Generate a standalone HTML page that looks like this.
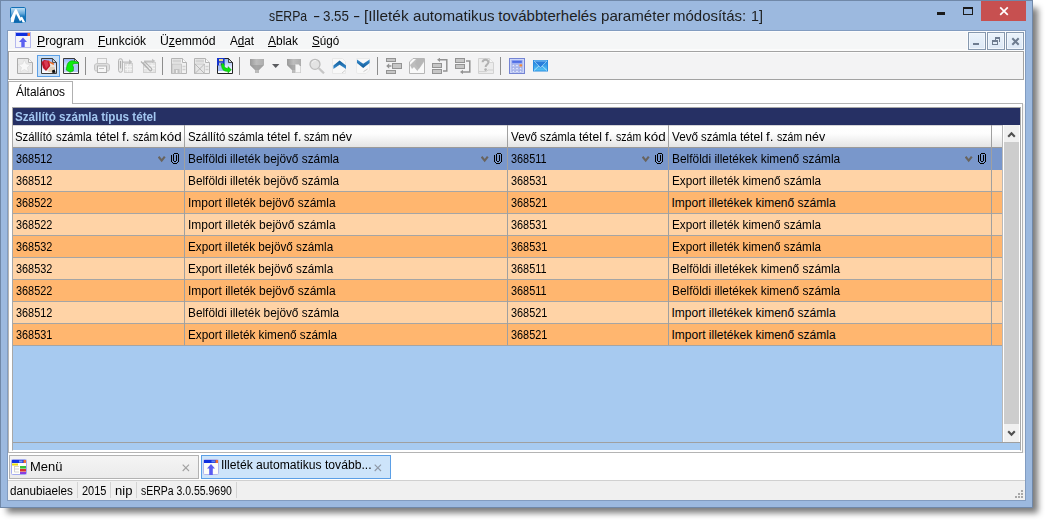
<!DOCTYPE html>
<html>
<head>
<meta charset="utf-8">
<title>sERPa</title>
<style>
html,body{margin:0;padding:0;background:#fff;}
body{width:1045px;height:520px;overflow:hidden;position:relative;font-family:"Liberation Sans",sans-serif;font-size:12px;color:#000;}
.a{position:absolute;}
.t{position:absolute;white-space:pre;transform-origin:0 50%;line-height:16px;height:16px;}
#shadow{left:6.5px;top:7.5px;width:1031.5px;height:505.5px;background:rgba(0,0,0,.52);filter:blur(3.2px);}
#win{left:0;top:0;width:1033px;height:508px;background:#9cb9df;box-sizing:border-box;border:1px solid #7088a8;}
#client{left:8px;top:31px;width:1017px;height:469px;background:#fff;outline:1px solid #829cc0;}
#menubar{left:0;top:0;width:1017px;height:20px;background:linear-gradient(#fcfcfd 0,#fcfcfd 1px,#f5f6f7 1px,#f5f6f7 18px,#fbfbfb 18px);}
#toolbar{left:0;top:20px;width:1016px;height:29px;box-sizing:border-box;border:1px solid #a2a2a2;background:#f3f3f4;box-shadow:inset 1px 1px 0 #fcfcfc;}
.sep{position:absolute;top:5px;width:1px;height:18px;background:#8d8d8d;}
.ic{position:absolute;top:6px;width:16px;height:16px;}
.mb{position:absolute;top:1px;width:16px;height:16px;border:1px solid #8698ae;background:linear-gradient(#ebf3fb,#dce8f6);box-shadow:0 0 0 1px #fbfcfe,inset 0 0 0 1px #f1f6fc;}
.row{position:absolute;left:0;width:989px;height:21px;border-bottom:1px solid #a5a5a5;}
.sel{background:#7997cb;border-bottom-color:#7997cb;}
.ro1{background:#ffd3a6;}
.ro2{background:#ffb66f;}
.vl{position:absolute;top:0;width:1px;background:#a0a0a0;}
.tw{top:0;font-size:15px;line-height:18px;height:18px;color:#1e1e1e;}
/*FIT-START*/
#m1{left:29.38px;top:2px;transform:scaleX(1.0215);}
#m2{left:89.50px;top:2px;transform:scaleX(1.0021);}
#m3{left:151.58px;top:2px;transform:scaleX(1.0170);}
#m4{left:221.50px;top:2px;transform:scaleX(0.9737);}
#m5{left:260.10px;top:2px;transform:scaleX(0.9967);}
#m6{left:303.51px;top:2px;transform:scaleX(0.9704);}
#tab{left:8.20px;top:53px;transform:scaleX(0.9918);}
#ph{left:2.11px;top:1px;transform:scaleX(0.9722);}
.k0.sN{left:2.85px;top:3px;transform:scaleX(0.9077);}
.k2.sN{left:497.85px;top:3px;transform:scaleX(0.9077);}
.k1.sA{left:174.51px;top:3px;transform:scaleX(0.9856);}
.k1.sB{left:174.50px;top:3px;transform:scaleX(0.9966);}
.k1.sC{left:174.52px;top:3px;transform:scaleX(0.9760);}
.k1.sD{left:174.52px;top:3px;transform:scaleX(0.9801);}
.k3.sD{left:658.52px;top:3px;transform:scaleX(0.9801);}
.k3.sE{left:658.51px;top:3px;transform:scaleX(0.9929);}
.k3.sF{left:658.50px;top:3px;transform:scaleX(1.0000);}
#mt1{left:21.52px;top:428px;transform:scaleX(1.0796);}
#mt2{left:213.49px;top:426px;transform:scaleX(1.0119);}
#s1{left:2.11px;top:452px;transform:scaleX(0.9725);}
#s2{left:73.84px;top:452px;transform:scaleX(0.9165);}
#s3{left:106.79px;top:452px;transform:scaleX(1.0847);}
#s4{left:133.28px;top:452px;transform:scaleX(0.8725);}
/*FIT-END*/
</style>
</head>
<body>
<div id="shadow" class="a"></div>
<div id="win" class="a"></div>

<!-- title bar -->
<svg class="a" style="left:10px;top:7px" width="16" height="16" viewBox="0 0 16 16">
 <defs><linearGradient id="lg1" x1="0" y1="0" x2="0" y2="1"><stop offset="0" stop-color="#c4e2f6"/><stop offset=".4" stop-color="#64a8da"/><stop offset=".6" stop-color="#1878bc"/><stop offset="1" stop-color="#0a64aa"/></linearGradient></defs>
 <rect x="0.500" y="0.500" width="15" height="15" rx="1.200" fill="url(#lg1)" stroke="#1270b6"/>
 <path d="M0.600 15.400 L0.600 11.200 L5.200 2.200 L6.600 2.200 L10.600 10.600 L12 9.400 L15.400 15.400 L12.600 15.400 L11.400 12.800 L10 14.400 L6 6.600 L3.600 15.400 Z" fill="#fff"/>
</svg>
<div class="a" id="titlew" style="left:0;top:7px;width:900px;height:18px;"><span class="t tw" style="left:269.19px;transform:scaleX(0.8173);">sERPa</span><span class="t tw" style="left:312.60px;transform:scaleX(1.4500);">-</span><span class="t tw" style="left:323.06px;transform:scaleX(0.8893);">3.55</span><span class="t tw" style="left:353.10px;transform:scaleX(1.4500);">-</span><span class="t tw" style="left:364.27px;transform:scaleX(1.0296);">[Illeték</span><span class="t tw" style="left:412.70px;transform:scaleX(1.0094);">automatikus</span><span class="t tw" style="left:498.25px;transform:scaleX(1.0000);">továbbterhelés</span><span class="t tw" style="left:600.69px;transform:scaleX(1.0082);">paraméter</span><span class="t tw" style="left:673.40px;transform:scaleX(0.9986);">módosítás:</span><span class="t tw" style="left:750.55px;transform:scaleX(0.9524);">1]</span></div>
<div class="a" style="left:937px;top:12px;width:8px;height:3px;background:#1a1a1a;"></div>
<div class="a" style="left:963px;top:7px;width:10px;height:8px;box-sizing:border-box;border:1px solid #1a1a1a;border-top-width:2px;"></div>
<div class="a" style="left:981px;top:1px;width:45px;height:20px;background:#c75050;"></div>
<svg class="a" style="left:999px;top:6px" width="10" height="10" viewBox="0 0 10 10"><path d="M1.200 1.400 L8.800 8.800 M8.800 1.400 L1.200 8.800" stroke="#fff" stroke-width="1.700" fill="none"/></svg>

<div id="client" class="a">
 <!-- menu bar -->
 <div id="menubar" class="a">
  <svg class="a" style="left:7px;top:1px" width="16" height="16" viewBox="0 0 16 16">
   <rect x="0.5" y="0.5" width="15" height="15" fill="#f4f4fa" stroke="#b4b8ee"/>
   <rect x="1" y="1" width="14" height="3" fill="#1030e0"/>
   <rect x="12.5" y="1" width="2.5" height="3" fill="#f07030"/>
   <path d="M8 5.5 L12 10 L9.7 10 L9.7 15 L6.3 15 L6.3 10 L4 10 Z" fill="#5a60f0"/>
  </svg>
  <div class="t" id="m1" style=""><u>P</u>rogram</div>
  <div class="t" id="m2" style=""><u>F</u>unkciók</div>
  <div class="t" id="m3" style="">Ü<u>z</u>emmód</div>
  <div class="t" id="m4" style="">A<u>d</u>at</div>
  <div class="t" id="m5" style=""><u>A</u>blak</div>
  <div class="t" id="m6" style=""><u>S</u>úgó</div>
  <div class="mb" style="left:960px;"><div class="a" style="left:4px;top:10px;width:6px;height:2px;background:#6e7c90;"></div></div>
  <div class="mb" style="left:979px;"><svg class="a" style="left:3px;top:3px" width="10" height="10" viewBox="0 0 10 10" shape-rendering="crispEdges"><path d="M4 1h5v2h-5z M8 3h1v3h-1z M4 3h1v1h-1z M1 4h6v2h-6z M1 6h1v3h-1z M6 6h1v3h-1z M1 8h6v1h-6z" fill="#6e7c90"/></svg></div>
  <div class="mb" style="left:998px;"><svg class="a" style="left:4px;top:4px" width="9" height="9" viewBox="0 0 9 9"><path d="M1.300 1.300 L7.700 7.700 M7.700 1.300 L1.300 7.700" stroke="#6e7c90" stroke-width="2" fill="none"/></svg></div>
 </div>
 <!-- toolbar -->
 <div id="toolbar" class="a">
  <div class="a" style="left:28px;top:3px;width:21px;height:20px;background:#c9e0f7;border:1px solid #5b9fe6;"></div>
  <!--ICONS-START-->
  <svg width="0" height="0" style="position:absolute"><defs>
   <linearGradient id="gDocB" x1="0" y1="0" x2="0" y2="1"><stop offset="0" stop-color="#8fb0f6"/><stop offset=".55" stop-color="#dfe9ff"/><stop offset="1" stop-color="#ffffff"/></linearGradient>
   <linearGradient id="gGray" x1="0" y1="0" x2="1" y2="0"><stop offset="0" stop-color="#9a9a9a"/><stop offset=".45" stop-color="#bdbdbd"/><stop offset="1" stop-color="#adadad"/></linearGradient>
   <linearGradient id="gChev" x1="0" y1="0" x2="0" y2="1"><stop offset="0" stop-color="#0f5a98"/><stop offset="1" stop-color="#3a8ed0"/></linearGradient>
   <linearGradient id="gChev2" x1="0" y1="0" x2="0" y2="1"><stop offset="0" stop-color="#3a8ed0"/><stop offset="1" stop-color="#0f5a98"/></linearGradient>
   <linearGradient id="gMail" x1="0" y1="0" x2="0" y2="1"><stop offset="0" stop-color="#1e78d8"/><stop offset="1" stop-color="#58c8f8"/></linearGradient>
  </defs></svg>
  <!-- 1 new (disabled) -->
  <svg class="ic" style="left:8px" viewBox="0 0 16 16"><path d="M0.500 0.500 H11.500 L15.500 4.500 V15.500 H0.500 Z" fill="#e9e9e9" stroke="#ababab"/><path d="M11.500 0.500 V4.500 H15.500" fill="#f6f6f6" stroke="#b4b4b4"/><path d="M7.400 1.800 L9.300 6 L13.800 6.400 L10.400 9.400 L11.500 14 L7.400 11.500 L3.300 14 L4.400 9.400 L1 6.400 L5.500 6 Z" fill="#f8f8f8" stroke="#dadada" stroke-width=".7"/></svg>
  <!-- 2 edit (pencil) -->
  <svg class="ic" style="left:32px" viewBox="0 0 16 16"><path d="M0.500 0.500 H11.500 L15.500 4.500 V15.500 H0.500 Z" fill="url(#gDocB)" stroke="#3a3a3a"/><path d="M11.500 0.500 V4.500 H15.500 Z" fill="#c4ccd6" stroke="#3a3a3a" stroke-width=".8"/><path d="M8 5.500 L13 6.200 L14 11.500 L11 14.600 L5 13 Z" fill="#efe4d6"/><path d="M9 9 L13.600 9 L14 11.500 L11 14.600 L7 13.500 Z" fill="#d8c4ac" opacity=".7"/><path d="M0.500 4.200 L3 2 L8.200 2.800 L9.200 8 L5 13 L2 10 Z" fill="#c0162c"/><path d="M2.600 3.200 L6.400 3 L7.600 7.600 L5 10.600 Z" fill="#e24a60" opacity=".75"/><path d="M7 2.400 L13.200 5.400 L12.600 7 L8.400 4.800 Z" fill="#ee6a1e"/><path d="M11 12.400 L13.600 11.400 L14.700 14.700 L11.400 15 Z" fill="#0c0c0c"/></svg>
  <!-- 3 doc + green arrow -->
  <svg class="ic" style="left:54px" viewBox="0 0 16 16"><path d="M0.500 0.500 H11.500 L15.500 4.500 V15.500 H0.500 Z" fill="url(#gDocB)" stroke="#3a3a3a"/><rect x="8" y="7" width="7" height="7" fill="#a4bcf6" opacity=".8"/><rect x="1" y="9" width="4" height="5" fill="#b4c8f8" opacity=".7"/><path d="M11.500 0.500 V4.500 H15.500 Z" fill="#c4ccd6" stroke="#3a3a3a" stroke-width=".8"/><path d="M15.500 4.300 L15.500 5.600 L11 5.700 C9.500 6 9 7.200 10.500 9 L10.300 13 L7 14.300 L3.200 12 L4 7.200 C5 3.600 8 2.200 11 3 Z" fill="#0aee0a" stroke="#089408" stroke-width=".6"/></svg>
  <div class="sep" style="left:76px"></div>
  <!-- 4 printer (disabled) -->
  <svg class="ic" style="left:85px" viewBox="0 0 16 16"><rect x="3.5" y="0.5" width="9" height="7" fill="#f3f3f3" stroke="#c9c9c9"/><path d="M0.5 8 C0.5 6 2 5.5 3.5 5.5 H12.5 C14 5.5 15.5 6 15.5 8 V11.5 C15.500 12.6 14.500 13 13 13 H3 C1.5 13 0.500 12.6 0.500 11.500 Z" fill="#dedede" stroke="#c4c4c4"/><rect x="3.5" y="8" width="9" height="6.5" fill="#f6f6f6" stroke="#b4b4b4"/><rect x="5" y="10" width="5" height="1" fill="#c4c4c4"/><rect x="3" y="14" width="10" height="1" fill="#ababab"/></svg>
  <!-- 5 clip+grid arrow (disabled) -->
  <svg class="ic" style="left:108px" viewBox="0 0 16 16"><rect x="7.5" y="5.5" width="8" height="9" fill="#e2e2e2" stroke="#cfcfcf"/><path d="M8 8.500 H15 M8 11.500 H15 M10.500 6 V14 M13 6 V14" stroke="#f2f2f2"/><path d="M6 3.500 H12 V1.200 L15.400 4 L12 6.600 V4.800 H6 Z" fill="#bdbdbd"/><rect x="1.5" y="0.700" width="4" height="13.600" rx="2" fill="#e9e9e9" stroke="#b6b6b6"/><path d="M3.500 3 V10.500" stroke="#adadad" stroke-width="1.200"/></svg>
  <!-- 6 diagonal clip + grid (disabled) -->
  <svg class="ic" style="left:131px" viewBox="0 0 16 16"><rect x="3.5" y="4.500" width="12" height="10" fill="#e4e4e4" stroke="#d0d0d0"/><path d="M4 7.500 H15 M4 10.500 H15 M8 5 V14 M12 5 V14" stroke="#f3f3f3"/><path d="M4 2.600 H12 V0.800 L15.400 3 L12 5.200 V4 H4 Z" fill="#c2c2c2"/><path d="M1 3.500 L9.500 12.200 C11 13.600 12.600 11.800 11.400 10.400 L4.600 3.600 M3 5 L8.600 10.800" fill="none" stroke="#b2b2b2" stroke-width="1.200"/></svg>
  <div class="sep" style="left:153px"></div>
  <!-- 7 save doc (disabled) -->
  <svg class="ic" style="left:162px" viewBox="0 0 16 16"><path d="M0.500 0.500 H11.500 L15.500 4.500 V15.500 H0.500 Z" fill="#f1f1f1" stroke="#b4b4b4"/><path d="M11.500 0.500 V4.500 H15.500" fill="#fafafa" stroke="#b4b4b4"/><rect x="1.500" y="1.500" width="8.500" height="3" fill="#d4d4d4"/><rect x="1" y="6" width="9.500" height="9.500" fill="#dcdcdc" stroke="#b4b4b4" stroke-width=".6"/><rect x="3" y="11" width="5.500" height="4.500" fill="#c2c2c2"/><rect x="5" y="12" width="1.500" height="3" fill="#eeeeee"/><path d="M11.500 8.500 H14.500 M11.500 11.500 H14.500" stroke="#cfcfcf" stroke-width="1.400"/></svg>
  <!-- 8 doc X (disabled) -->
  <svg class="ic" style="left:185px" viewBox="0 0 16 16"><path d="M0.500 0.500 H11.500 L15.500 4.500 V15.500 H0.500 Z" fill="#f1f1f1" stroke="#b4b4b4"/><path d="M11.500 0.500 V4.500 H15.500" fill="#fafafa" stroke="#b4b4b4"/><rect x="1.500" y="1.500" width="8.500" height="3" fill="#d4d4d4"/><rect x="1" y="6" width="9.500" height="9.500" fill="#e6e6e6" stroke="#b4b4b4" stroke-width=".6"/><path d="M1 6 L10.500 15.500 M10.500 6 L1 15.500" stroke="#b2b2b2" stroke-width=".9"/><path d="M11.500 8.500 H14.500 M11.500 11.500 H14.500" stroke="#cfcfcf" stroke-width="1.400"/></svg>
  <!-- 9 save + green arrow -->
  <svg class="ic" style="left:208px" viewBox="0 0 16 16"><path d="M0.500 0.500 H11.500 L15.500 4.500 V15.500 H0.500 Z" fill="url(#gDocB)" stroke="#222222"/><rect x="1" y="8" width="6" height="5" fill="#9fb8f4" opacity=".9"/><path d="M11.500 0.500 V4.500 H15.500 Z" fill="#c8d0d8" stroke="#222222" stroke-width=".8"/><rect x="0" y="0" width="7.600" height="7.600" fill="#1434d0"/><rect x="2" y="1" width="4" height="2.200" fill="#e8d488"/><rect x="2" y="4.600" width="3.600" height="3" fill="#b8bcc8"/><rect x="3.800" y="5.200" width="1.200" height="1.800" fill="#2038b0"/><path d="M4.400 6 L7 5.600 C7 9.600 8.600 10.400 11 10.400 L11 8.600 L14.400 11.800 L11 15 L11 13.400 C6.600 13.600 4.400 11.400 4.400 6 Z" fill="#0be40b" stroke="#0a9a0a" stroke-width=".5"/></svg>
  <div class="sep" style="left:230px"></div>
  <!-- funnel -->
  <svg class="ic" style="left:241px" viewBox="0 0 16 16"><path d="M0 1 H14 V7 L9 12 V15 H5 V12 L0 7 Z" fill="url(#gGray)"/><path d="M0 7 L5 12 H9 L14 7 Z" fill="#939393" opacity=".55"/></svg>
  <svg class="a" style="left:263px;top:12px" width="8" height="4" viewBox="0 0 8 4"><path d="M0 0 H7.400 L3.700 4 Z" fill="#5a5b5f"/></svg>
  <!-- funnel + doc -->
  <svg class="ic" style="left:278px" viewBox="0 0 16 16"><path d="M0 1 H14 V15 H5 V12 L0 7 Z" fill="url(#gGray)"/><path d="M0 7 L5 12 H9 L14 7 Z" fill="#939393" opacity=".45"/><path d="M8.500 6.500 H11.500 L13.500 8.500 V14.500 H8.500 Z" fill="#f6f6f6" stroke="#d8d8d8" stroke-width=".7"/></svg>
  <!-- magnifier (disabled) -->
  <svg class="ic" style="left:300px" viewBox="0 0 16 16"><path d="M9.800 10.200 L15 15.400" stroke="#c6c6c6" stroke-width="2.200"/><circle cx="6" cy="6.300" r="5" fill="#e3e3e3" stroke="#bcbcbc" stroke-width="1.300"/><path d="M3 5 A3.600 3.600 0 0 1 7 2.600" fill="none" stroke="#f2f2f2" stroke-width="1"/></svg>
  <!-- up chevron -->
  <svg class="ic" style="left:323px" viewBox="0 0 16 16"><path d="M0.500 0.500 H10.500 L13.500 3.500 V15.500 H0.500 Z" fill="#f8f8f8" stroke="#e8e8e8"/><path d="M1.400 11 V7.400 L7.600 2.500 L14 7.400 V11 L7.600 6.800 Z" fill="url(#gChev)"/><path d="M10 15 L13 12.500" stroke="#cfcfcf"/></svg>
  <!-- down chevron -->
  <svg class="ic" style="left:346px" viewBox="0 0 16 16"><path d="M1.500 0.500 H14.500 V12 L11 15.500 H3 Q1.500 15.500 1.500 14 Z" fill="#f8f8f8" stroke="#eaeaea"/><path d="M2 1.400 V5 L8.200 9.900 L14.600 5 V1.400 L8.200 5.800 Z" fill="url(#gChev2)"/><path d="M8.500 13.600 L12.600 11" stroke="#c8c8c8"/></svg>
  <div class="sep" style="left:368px"></div>
  <!-- rects + left arrow -->
  <svg class="ic" style="left:377px" viewBox="0 0 16 16"><g fill="#c6c6c6" stroke="#939393"><rect x="0.500" y="0.500" width="9" height="3"/><rect x="6.500" y="5.500" width="9" height="5"/><rect x="0.500" y="12.500" width="9" height="3"/></g><path d="M0.200 8 L3.200 5.200 V7.200 H5.400 V8.800 H3.200 V10.800 Z" fill="#939393"/></svg>
  <!-- eraser doc -->
  <svg class="ic" style="left:400px" viewBox="0 0 16 16"><path d="M4 0.500 H15.500 V15.500 H0.500 V4 Z" fill="#f9f9f9" stroke="#b6b6b6"/><path d="M7 1 L15 1 L15 3 L8.400 13 L5 9 L3 11 L1 7 L4 4 Z" fill="#bdbdbd"/><path d="M8 1 H15 V4 L10 11 L6 6 Z" fill="#b4b4b4" opacity=".7"/></svg>
  <!-- rects + arrow up-left -->
  <svg class="ic" style="left:423px" viewBox="0 0 16 16"><g fill="#c6c6c6" stroke="#939393"><rect x="0.500" y="5.500" width="9" height="4"/><rect x="0.500" y="11.500" width="9" height="4"/></g><path d="M11 13 H14.800 V1.800 H8" fill="none" stroke="#939393" stroke-width="1.500"/><path d="M5 1.800 L8 -0.400 V4 Z" fill="#939393"/></svg>
  <!-- rects + arrow down-left -->
  <svg class="ic" style="left:446px" viewBox="0 0 16 16"><g fill="#c6c6c6" stroke="#939393"><rect x="0.500" y="0.500" width="9" height="4"/><rect x="0.500" y="6.500" width="9" height="4"/></g><path d="M11 3 H14.800 V14 H8" fill="none" stroke="#939393" stroke-width="1.500"/><path d="M5 14 L8 11.800 V16.200 Z" fill="#939393"/></svg>
  <!-- ? doc -->
  <svg class="ic" style="left:469px" viewBox="0 0 16 16"><path d="M0.500 0.500 H11.500 L15.500 4.500 V15.500 H0.500 Z" fill="#ececec" stroke="#d2d2d2"/><path d="M11.500 0.500 V4.500 H15.500" fill="#f6f6f6" stroke="#d6d6d6"/><path d="M4.600 4.200 C4.600 0.800 10.400 0.800 10.400 4.200 C10.400 6.400 7.600 6.600 7.600 9" fill="none" stroke="#b2b2b2" stroke-width="2"/><circle cx="7.600" cy="11.600" r="1.300" fill="#b2b2b2"/><path d="M1 13.600 H8 L10 12 H15" fill="none" stroke="#cfcfcf"/></svg>
  <div class="sep" style="left:491px"></div>
  <!-- calculator -->
  <svg class="ic" style="left:500px" viewBox="0 0 16 16"><rect x="0.500" y="0.500" width="15" height="15" fill="#b4c0f0" stroke="#7484d4"/><rect x="1.500" y="1.500" width="13" height="13" fill="none" stroke="#d4dcfa" stroke-width=".8"/><rect x="3" y="2.500" width="10" height="2.600" fill="#4f6ee4" stroke="#8ea4f4" stroke-width=".5"/><g fill="#e4eafc" stroke="#8c9ce0" stroke-width=".4"><rect x="3.200" y="6.600" width="2.200" height="2"/><rect x="6.900" y="6.600" width="2.200" height="2"/><rect x="3.200" y="9.600" width="2.200" height="2"/><rect x="6.900" y="9.600" width="2.200" height="2"/><rect x="10.600" y="9.600" width="2.200" height="2"/><rect x="3.200" y="12.400" width="2.200" height="2"/><rect x="6.900" y="12.400" width="2.200" height="2"/><rect x="10.600" y="12.400" width="2.200" height="2"/></g><rect x="10.400" y="6.200" width="2.800" height="2.400" rx=".6" fill="#f08a3c"/></svg>
  <!-- mail -->
  <svg class="ic" style="left:524px" viewBox="0 0 16 16"><rect x="0.500" y="2.500" width="14" height="10.500" fill="url(#gMail)" stroke="#2a8ce0"/><path d="M1 12.600 L6 7.800 M14 12.600 L9 7.800" stroke="#b4e4fc" stroke-width=".9"/><path d="M1 3 L7.500 9.600 L14 3 Z" fill="#2a7edc" stroke="#9cd4f8" stroke-width=".8"/></svg>
  <!--ICONS-END-->
 </div>
 <!-- tab strip -->
 <div class="a" style="left:0;top:72px;width:1015px;height:350px;box-sizing:border-box;border:1px solid #b4b4b4;border-left:none;"></div>
 <div class="a" style="left:0;top:50px;width:65px;height:23px;box-sizing:border-box;border:1px solid #b0b0b0;border-bottom:none;background:#fff;"></div>
 <div class="a" style="left:0;top:72px;width:1px;height:350px;background:#b4b4b4;"></div>
 <div class="a" style="left:1015px;top:73px;width:2px;height:349px;background:#f5f5f5;"></div>
 <div class="t" id="tab" style="">Általános</div>

 <!-- panel -->
 <div class="a" id="panel" style="left:4px;top:76px;width:1009px;height:344px;box-sizing:border-box;border:1px solid #a8a8a8;border-bottom-color:#fff;background:#a7caf0;">
  <div class="a" style="left:0;top:0;width:1007px;height:17px;background:#263064;"></div>
  <div class="t" id="ph" style="font-weight:bold;color:#a3c7f1;">Szállító számla típus tétel</div>
  <!-- column header -->
  <div class="a" style="left:0;top:17px;width:1007px;height:22px;background:linear-gradient(#d4d4d8 0,#d4d4d8 1px,#ffffff 1px,#fdfdfd 40%,#e4e4e4 100%);border-bottom:1px solid #9a9a9a;"></div>
  <div class="a" id="h1w" style="left:0;top:21px;width:10px;height:16px;"><span class="t" style="left:2.38px;top:0;transform:scaleX(0.9429);">Szállító</span><span class="t" style="left:43.21px;top:0;transform:scaleX(0.9404);">számla</span><span class="t" style="left:82.50px;top:0;transform:scaleX(1.0161);">tétel</span><span class="t" style="left:108.63px;top:0;transform:scaleX(1.1200);">f.</span><span class="t" style="left:119.52px;top:0;transform:scaleX(0.8800);">szám</span><span class="t" style="left:147.11px;top:0;transform:scaleX(1.1167);">kód</span></div>
  <div class="a" id="h2w" style="left:0;top:21px;width:10px;height:16px;"><span class="t" style="left:174.57px;top:0;transform:scaleX(0.9506);">Szállító</span><span class="t" style="left:215.41px;top:0;transform:scaleX(0.9430);">számla</span><span class="t" style="left:254.39px;top:0;transform:scaleX(1.0253);">tétel</span><span class="t" style="left:280.58px;top:0;transform:scaleX(1.1200);">f.</span><span class="t" style="left:291.43px;top:0;transform:scaleX(0.8865);">szám</span><span class="t" style="left:319.38px;top:0;transform:scaleX(1.0324);">név</span></div>
  <div class="a" id="h3w" style="left:0;top:21px;width:10px;height:16px;"><span class="t" style="left:497.85px;top:0;transform:scaleX(0.9752);">Vevő</span><span class="t" style="left:527.01px;top:0;transform:scaleX(0.9404);">számla</span><span class="t" style="left:566.00px;top:0;transform:scaleX(1.0069);">tétel</span><span class="t" style="left:592.03px;top:0;transform:scaleX(1.1200);">f.</span><span class="t" style="left:602.82px;top:0;transform:scaleX(0.8800);">szám</span><span class="t" style="left:630.61px;top:0;transform:scaleX(1.1167);">kód</span></div>
  <div class="a" id="h4w" style="left:0;top:21px;width:10px;height:16px;"><span class="t" style="left:658.85px;top:0;transform:scaleX(0.9752);">Vevő</span><span class="t" style="left:688.01px;top:0;transform:scaleX(0.9404);">számla</span><span class="t" style="left:727.00px;top:0;transform:scaleX(1.0069);">tétel</span><span class="t" style="left:753.03px;top:0;transform:scaleX(1.1200);">f.</span><span class="t" style="left:763.82px;top:0;transform:scaleX(0.8800);">szám</span><span class="t" style="left:791.67px;top:0;transform:scaleX(1.0432);">név</span></div>
  <div class="row sel" style="top:40px;">
   <span class="t k0 sN">368512</span>
   <span class="t k1 sA">Belföldi illeték bejövő számla</span>
   <span class="t k2 sN">368511</span>
   <span class="t k3 sE">Belföldi illetékek kimenő számla</span>
  </div>
  <div class="row ro1" style="top:62px;">
   <span class="t k0 sN">368512</span>
   <span class="t k1 sA">Belföldi illeték bejövő számla</span>
   <span class="t k2 sN">368531</span>
   <span class="t k3 sD">Export illeték kimenő számla</span>
  </div>
  <div class="row ro2" style="top:84px;">
   <span class="t k0 sN">368522</span>
   <span class="t k1 sB">Import illeték bejövő számla</span>
   <span class="t k2 sN">368521</span>
   <span class="t k3 sF">Import illetékek kimenő számla</span>
  </div>
  <div class="row ro1" style="top:106px;">
   <span class="t k0 sN">368522</span>
   <span class="t k1 sB">Import illeték bejövő számla</span>
   <span class="t k2 sN">368531</span>
   <span class="t k3 sD">Export illeték kimenő számla</span>
  </div>
  <div class="row ro2" style="top:128px;">
   <span class="t k0 sN">368532</span>
   <span class="t k1 sC">Export illeték bejövő számla</span>
   <span class="t k2 sN">368531</span>
   <span class="t k3 sD">Export illeték kimenő számla</span>
  </div>
  <div class="row ro1" style="top:150px;">
   <span class="t k0 sN">368532</span>
   <span class="t k1 sC">Export illeték bejövő számla</span>
   <span class="t k2 sN">368511</span>
   <span class="t k3 sE">Belföldi illetékek kimenő számla</span>
  </div>
  <div class="row ro2" style="top:172px;">
   <span class="t k0 sN">368522</span>
   <span class="t k1 sB">Import illeték bejövő számla</span>
   <span class="t k2 sN">368511</span>
   <span class="t k3 sE">Belföldi illetékek kimenő számla</span>
  </div>
  <div class="row ro1" style="top:194px;">
   <span class="t k0 sN">368512</span>
   <span class="t k1 sA">Belföldi illeték bejövő számla</span>
   <span class="t k2 sN">368521</span>
   <span class="t k3 sF">Import illetékek kimenő számla</span>
  </div>
  <div class="row ro2" style="top:216px;">
   <span class="t k0 sN">368531</span>
   <span class="t k1 sD">Export illeték kimenő számla</span>
   <span class="t k2 sN">368521</span>
   <span class="t k3 sF">Import illetékek kimenő számla</span>
  </div>
  <div class="vl" style="left:171px;top:17px;height:220px;"></div>
  <div class="vl" style="left:494px;top:17px;height:220px;"></div>
  <div class="vl" style="left:655px;top:17px;height:220px;"></div>
  <div class="vl" style="left:978px;top:17px;height:220px;"></div>

  <!-- right filler column line + scrollbar -->
  <div class="vl" style="left:989px;top:17px;height:318px;background:#b9b9b9;"></div>
  <div class="a" style="left:990px;top:17px;width:17px;height:318px;background:#fff;"></div>
  <div class="a" style="left:991px;top:17px;width:15px;height:318px;background:#f0f0f0;"></div>
  <div class="a" style="left:991px;top:34px;width:15px;height:282px;background:#cdcdcd;"></div>
  <svg class="a" style="left:994px;top:23px" width="9" height="7" viewBox="0 0 9 7"><path d="M1.2 5.800 L4.500 2.300 L7.800 5.800" fill="none" stroke="#505050" stroke-width="2.100"/></svg>
  <svg class="a" style="left:994px;top:322px" width="9" height="7" viewBox="0 0 9 7"><path d="M1.2 1.200 L4.500 4.700 L7.800 1.200" fill="none" stroke="#505050" stroke-width="2.100"/></svg>
  <div class="a" style="left:0;top:334px;width:1007px;height:1px;background:#9f9f9f;"></div>
  <!-- selected row icons -->
  <svg class="a" style="left:145px;top:48px" width="8" height="7" viewBox="0 0 8 7"><path d="M0.600 0.700 L3.700 4.600 L6.800 0.700" fill="none" stroke="#69645e" stroke-width="2.150"/></svg>
  <svg class="a" style="left:158px;top:45px" width="8" height="11" viewBox="0 0 8 11" shape-rendering="crispEdges"><path d="M3 0h4v1h-4z M2 1h1v7h-1z M7 1h1v8h-1z M0 2h1v7h-1z M5 2h1v6h-1z M3 8h2v1h-2z M1 9h1v1h-1z M6 9h1v1h-1z M2 10h4v1h-4z" fill="#000"/></svg>
  <svg class="a" style="left:468px;top:48px" width="8" height="7" viewBox="0 0 8 7"><path d="M0.600 0.700 L3.700 4.600 L6.800 0.700" fill="none" stroke="#69645e" stroke-width="2.150"/></svg>
  <svg class="a" style="left:481px;top:45px" width="8" height="11" viewBox="0 0 8 11" shape-rendering="crispEdges"><path d="M3 0h4v1h-4z M2 1h1v7h-1z M7 1h1v8h-1z M0 2h1v7h-1z M5 2h1v6h-1z M3 8h2v1h-2z M1 9h1v1h-1z M6 9h1v1h-1z M2 10h4v1h-4z" fill="#000"/></svg>
  <svg class="a" style="left:629px;top:48px" width="8" height="7" viewBox="0 0 8 7"><path d="M0.600 0.700 L3.700 4.600 L6.800 0.700" fill="none" stroke="#69645e" stroke-width="2.150"/></svg>
  <svg class="a" style="left:642px;top:45px" width="8" height="11" viewBox="0 0 8 11" shape-rendering="crispEdges"><path d="M3 0h4v1h-4z M2 1h1v7h-1z M7 1h1v8h-1z M0 2h1v7h-1z M5 2h1v6h-1z M3 8h2v1h-2z M1 9h1v1h-1z M6 9h1v1h-1z M2 10h4v1h-4z" fill="#000"/></svg>
  <svg class="a" style="left:952px;top:48px" width="8" height="7" viewBox="0 0 8 7"><path d="M0.600 0.700 L3.700 4.600 L6.800 0.700" fill="none" stroke="#69645e" stroke-width="2.150"/></svg>
  <svg class="a" style="left:965px;top:45px" width="8" height="11" viewBox="0 0 8 11" shape-rendering="crispEdges"><path d="M3 0h4v1h-4z M2 1h1v7h-1z M7 1h1v8h-1z M0 2h1v7h-1z M5 2h1v6h-1z M3 8h2v1h-2z M1 9h1v1h-1z M6 9h1v1h-1z M2 10h4v1h-4z" fill="#000"/></svg>
 </div>

 <!-- MDI tabs -->
 <div class="a" style="left:1px;top:424px;width:190px;height:24px;box-sizing:border-box;border:1px solid #b2b2b2;background:linear-gradient(#f4f4f4,#ebebeb);"></div>
 <div class="a" style="left:193px;top:424px;width:190px;height:24px;box-sizing:border-box;border:1px solid #5b9fe6;background:#cde4fa;"></div>
<svg class="a" style="left:3px;top:428px" width="16" height="16" viewBox="0 0 16 16"><rect x="0.500" y="0.500" width="15" height="15" rx="1" fill="#fffffa" stroke="#a4acf0"/><rect x="1" y="1" width="14" height="3" fill="#1232e2"/><rect x="8" y="1.500" width="3.500" height="2" fill="#7c9cf4"/><rect x="12.500" y="1" width="2.500" height="3" fill="#f07030"/><rect x="1" y="4.500" width="6" height="2" fill="#e8dc10"/><path d="M3.500 7 V13 H8 M3.500 10 H8 M3.500 7.500 H8" fill="none" stroke="#c8c8c8" stroke-width=".8"/><rect x="9" y="7" width="6" height="2.600" fill="#38c038"/><rect x="9" y="10" width="6" height="2.600" fill="#d83030"/><rect x="9" y="13" width="6" height="2" fill="#8a3ce0"/></svg>
 <svg class="a" style="left:195px;top:428px" width="16" height="16" viewBox="0 0 16 16"><rect x="0.500" y="0.500" width="15" height="15" rx="1.200" fill="#fdfdf8" stroke="#b4b8ee"/><rect x="1" y="1" width="14" height="3" fill="#1030e0"/><rect x="8.500" y="1.400" width="3.500" height="2" fill="#5c80f0"/><rect x="12.500" y="1" width="2.500" height="3" fill="#f07030"/><path d="M8 5 L12 9.500 H9.800 V16 H6.200 V9.500 H4 Z" fill="#5a5cf2"/></svg>
 <svg class="a" style="left:174px;top:433px" width="8" height="8" viewBox="0 0 8 8"><path d="M0.700 0.700 L7 7 M7 0.700 L0.700 7" stroke="#a0a0a0" stroke-width="1.100" fill="none"/></svg>
 <svg class="a" style="left:366px;top:433px" width="8" height="8" viewBox="0 0 8 8"><path d="M0.700 0.700 L7 7 M7 0.700 L0.700 7" stroke="#8e98a6" stroke-width="1.100" fill="none"/></svg>
 <div class="t" id="mt1" style="">Menü</div>
 <div class="t" id="mt2" style="">Illeték automatikus tovább...</div>
 <!-- status bar -->
 <div class="a" style="left:0;top:449px;width:1017px;height:20px;background:#f0f0f0;border-top:1px solid #d0d0d0;box-sizing:border-box;"></div>
<svg class="a" style="left:1007px;top:459px" width="9" height="9" viewBox="0 0 9 9" shape-rendering="crispEdges"><g fill="#a8a8a8"><rect x="6" y="0" width="2" height="2"/><rect x="3" y="3" width="2" height="2"/><rect x="6" y="3" width="2" height="2"/><rect x="0" y="6" width="2" height="2"/><rect x="3" y="6" width="2" height="2"/><rect x="6" y="6" width="2" height="2"/></g></svg>
 <div class="a" style="left:69px;top:451px;width:1px;height:16px;background:#d4d4d4;"></div>
 <div class="a" style="left:102px;top:451px;width:1px;height:16px;background:#d4d4d4;"></div>
 <div class="a" style="left:128px;top:451px;width:1px;height:16px;background:#d4d4d4;"></div>
 <div class="a" style="left:228px;top:451px;width:1px;height:16px;background:#d4d4d4;"></div>
 <div class="t" id="s1" style="">danubiaeles</div>
 <div class="t" id="s2" style="">2015</div>
 <div class="t" id="s3" style="">nip</div>
 <div class="t" id="s4" style="">sERPa 3.0.55.9690</div>
</div>
</body>
</html>
